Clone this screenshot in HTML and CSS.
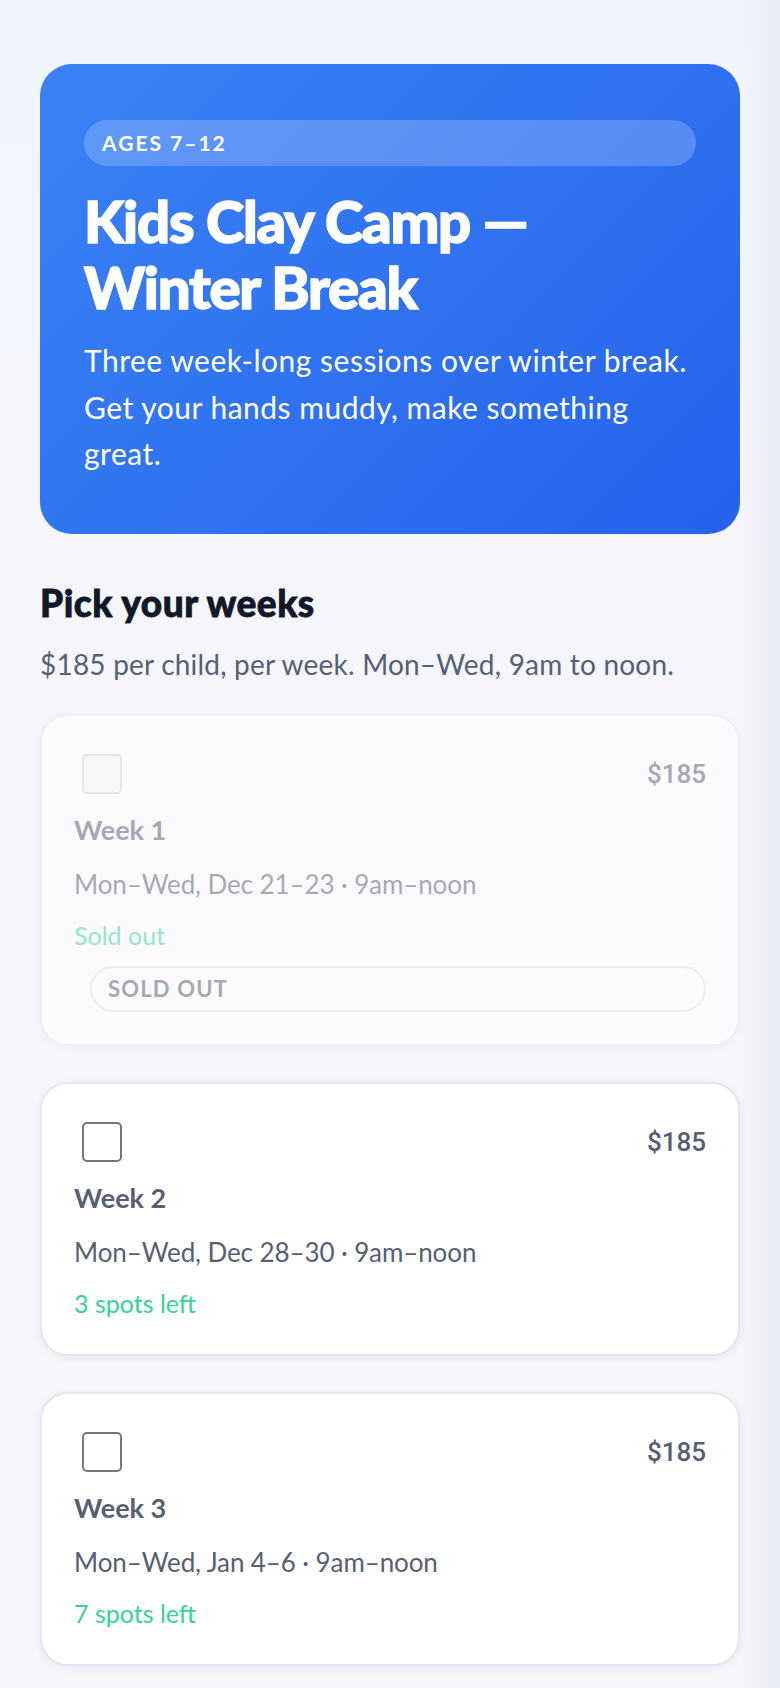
FILE: index.html
```html
<!DOCTYPE html>
<html lang="en">
<head>
  <meta charset="UTF-8" />
  <meta name="viewport" content="width=device-width, initial-scale=1.0"/>
  <title>Kids Clay Camp</title>
  <link rel="stylesheet" href="styles.css">
</head>
<body>
  <div class="hero">
    <div class="pill">AGES 7–12</div>
    <h1>Kids Clay Camp — Winter Break</h1>
    <p>Three week-long sessions over winter break. Get your hands muddy, make something great.</p>
  </div>

  <h2>Pick your weeks</h2>
  <p class="intro">$185 per child, per week. Mon–Wed, 9am to noon.</p>

  <div class="card sold">
    <div class="top">
      <span class="check"></span>
      <span class="price">$185</span>
    </div>
    <div class="week">Week 1</div>
    <div class="dates">Mon–Wed, Dec 21–23 · 9am–noon</div>
    <div class="spots">Sold out</div>
    <div class="sold-tag">SOLD OUT</div>
  </div>

  <div class="card">
    <div class="top">
      <span class="check"></span>
      <span class="price">$185</span>
    </div>
    <div class="week">Week 2</div>
    <div class="dates">Mon–Wed, Dec 28–30 · 9am–noon</div>
    <div class="spots">3 spots left</div>
  </div>

  <div class="card">
    <div class="top">
      <span class="check"></span>
      <span class="price">$185</span>
    </div>
    <div class="week">Week 3</div>
    <div class="dates">Mon–Wed, Jan 4–6 · 9am–noon</div>
    <div class="spots">7 spots left</div>
  </div>
</body>
</html>
```

FILE: styles.css
```css
* {
  box-sizing: border-box;
}
html, body {
  height: 100%;
}
body {
  margin: 0;
  padding: 64px 40px 0;
  overflow: hidden;
  font-family: "Lato", "Open Sans", sans-serif;
  color: #566072;
  background: linear-gradient(90deg, rgba(226,229,240,0) 95%, #e9ebf3 100%), linear-gradient(180deg, #f0f4fd 0, #f5f6fb 560px);
}
.hero {
  height: 470px;
  padding: 56px 44px 0;
  border-radius: 32px;
  color: #fff;
  background: linear-gradient(135deg, #3b82f6, #2563eb);
}
.pill {
  height: 46px;
  padding: 0 18px;
  border-radius: 23px;
  font-size: 21px;
  font-weight: 700;
  line-height: 46px;
  letter-spacing: 2px;
  background: rgba(255,255,255,0.2);
}
h1 {
  margin: 22px 0 0;
  font-size: 58px;
  font-weight: 900;
  line-height: 66px;
  letter-spacing: -1.2px;
  -webkit-text-stroke: 1.5px #fff;
}
.hero p {
  margin: 17px 0 0;
  font-size: 30px;
  line-height: 46.5px;
  letter-spacing: 0.5px;
}
h2 {
  margin: 47px 0 0;
  font-size: 37px;
  font-weight: 900;
  line-height: 44px;
  letter-spacing: 0.5px;
  -webkit-text-stroke: 0.8px #111827;
  color: #111827;
}
.intro {
  margin: 19px 0 0;
  font-size: 28px;
  line-height: 40px;
  letter-spacing: 0.2px;
}
.card {
  margin-top: 30px;
  padding: 38px 32px 33px;
  border: 2px solid #e5e7f0;
  border-radius: 28px;
  background: #fff;
  box-shadow: 0 2px 8px rgba(30,41,80,0.06);
}
.card + .card {
  margin-top: 36px;
}
.top {
  display: flex;
  justify-content: space-between;
  align-items: center;
}
.check {
  width: 40px;
  height: 40px;
  margin-left: 8px;
  border: 2px solid #767676;
  border-radius: 5px;
  background: #fff;
}
.price {
  font-family: "Roboto", sans-serif;
  font-size: 26px;
  font-weight: 500;
  line-height: 36px;
}
.week {
  margin-top: 18px;
  font-size: 27px;
  font-weight: 700;
  line-height: 36px;
}
.dates {
  margin-top: 18px;
  font-size: 26px;
  line-height: 36px;
  letter-spacing: -0.1px;
}
.spots {
  margin-top: 15px;
  font-size: 25px;
  line-height: 36px;
  color: #34d399;
}
.sold {
  padding-bottom: 32px;
  background: #fbfbfd;
  box-shadow: 0 2px 8px rgba(30,41,80,0.04);
  border-color: #eef0f6;
}
.sold .price, .sold .week, .sold .dates {
  color: #a5a9b4;
}
.sold .check {
  border-color: #e4e5e8;
  background: #f6f7f9;
}
.sold .spots {
  color: #92e8c8;
}
.sold-tag {
  height: 46px;
  margin: 13px 0 0 16px;
  padding: 0 16px;
  border: 2px solid #ebedf3;
  border-radius: 23px;
  font-size: 22px;
  font-weight: 700;
  line-height: 42px;
  letter-spacing: 1.2px;
  color: #a5a9b4;
}
```
